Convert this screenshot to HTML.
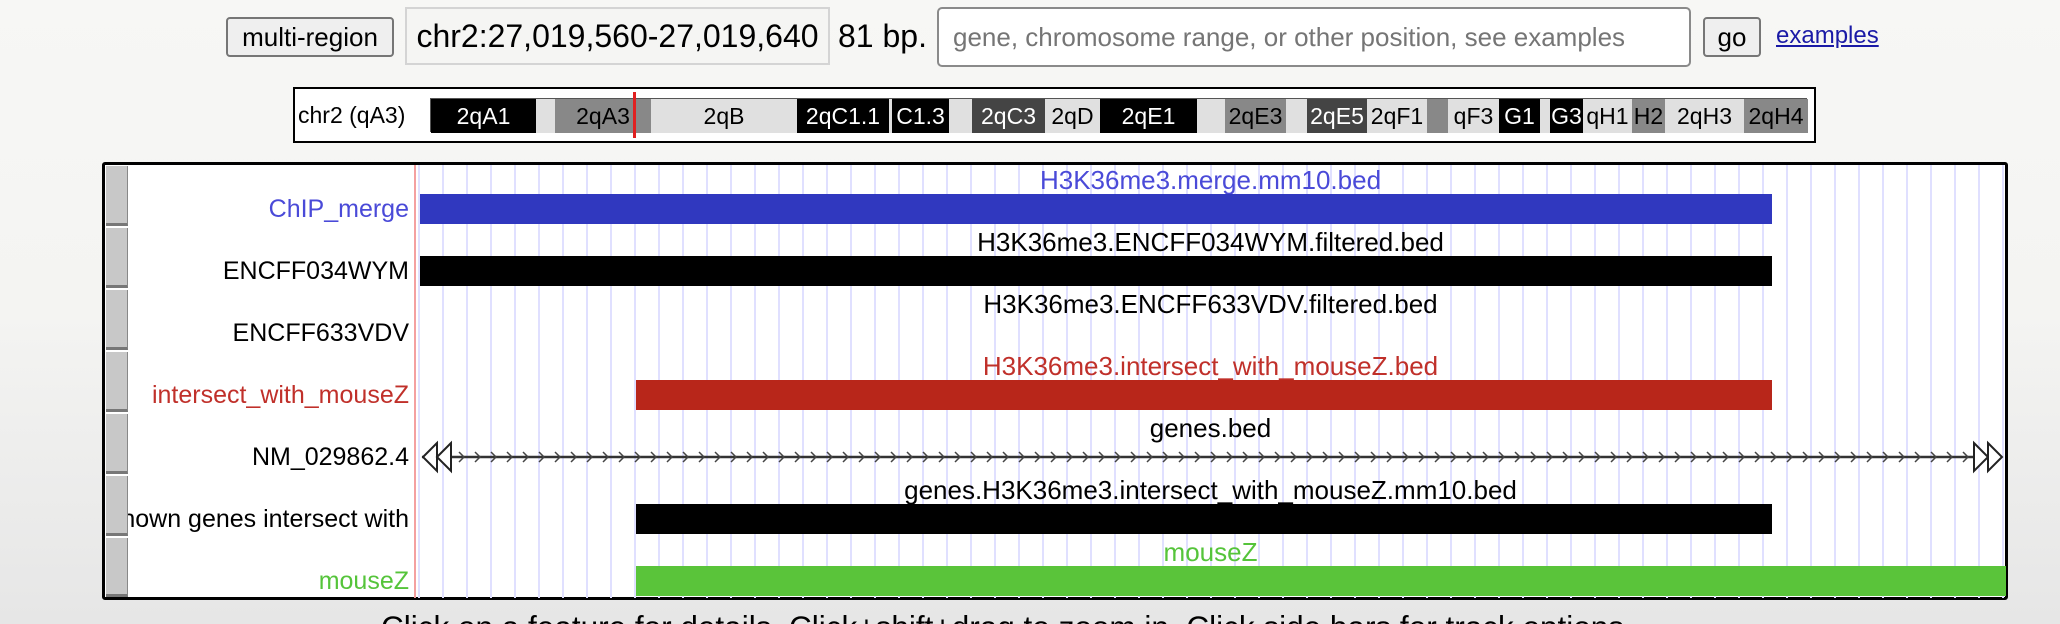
<!DOCTYPE html>
<html style="overflow:hidden;width:2060px;height:624px"><head><meta charset="utf-8"><style>
*{margin:0;padding:0;box-sizing:border-box}
body{width:2060px;height:624px;overflow:hidden;position:relative;font-family:"Liberation Sans",Arial,sans-serif;background:linear-gradient(#f7f7f5 0%,#f4f4f2 50%,#e6e6e6 100%)}
.a{position:absolute}
.btn{background:#efefef;border:2px solid #767676;border-radius:4px;font-size:26px;color:#000;text-align:center}
.band{position:absolute;top:0;height:34px;font-size:23px;line-height:34px;text-align:center;overflow:hidden;white-space:nowrap}
.bk{background:#000;color:#fff}.lt{background:#e0e0e0;color:#000}.gy{background:#888;color:#000}.dg{background:#444;color:#fff}
.side{position:absolute;left:106px;width:22px;height:60px;background:#c8c8c8;border-right:1px solid #888;border-bottom:3px solid #777}
.lbl{position:absolute;right:1651px;font-size:25px;white-space:nowrap;text-align:right;line-height:28px}
.ttl{position:absolute;left:415px;width:1591px;text-align:center;font-size:26px;line-height:26px;white-space:nowrap}
.bar{position:absolute;height:30px}
</style></head><body>
<div class="a btn" style="left:226px;top:17px;width:168px;height:40px;line-height:36px">multi-region</div>
<div class="a" style="left:405px;top:7px;width:425px;height:58px;border:2px solid #d4d4d4;background:#f5f5f3;font-size:32px;line-height:54px;text-align:center">chr2:27,019,560-27,019,640</div>
<div class="a" style="left:838px;top:7px;font-size:32px;line-height:58px">81 bp.</div>
<div class="a" style="left:937px;top:7px;width:754px;height:60px;border:2px solid #8a8a8a;border-radius:5px;background:#fff;font-size:26px;line-height:56px;color:#757575;padding-left:14px;white-space:nowrap">gene, chromosome range, or other position, see examples</div>
<div class="a btn" style="left:1703px;top:17px;width:58px;height:40px;line-height:36px">go</div>
<div class="a" style="left:1776px;top:22px;font-size:24px;color:#1a1aa6;text-decoration:underline">examples</div>

<div class="a" style="left:293px;top:87px;width:1523px;height:56px;border:2px solid #000;background:#fff"></div>
<div class="a" style="left:298px;top:98px;font-size:23px;line-height:34px">chr2 (qA3)</div>
<div class="a" style="left:430px;top:98px;width:1377px;height:34px;border:1px solid #555">
<div class="band bk" style="left:0;width:105px">2qA1</div>
<div class="band lt" style="left:105px;width:19px"></div>
<div class="band gy" style="left:124px;width:96px">2qA3</div>
<div class="band lt" style="left:220px;width:146px">2qB</div>
<div class="band bk" style="left:366px;width:92px">2qC1.1</div>
<div class="band lt" style="left:458px;width:3px"></div>
<div class="band bk" style="left:461px;width:57px">C1.3</div>
<div class="band lt" style="left:518px;width:23px"></div>
<div class="band dg" style="left:541px;width:73px">2qC3</div>
<div class="band lt" style="left:614px;width:55px">2qD</div>
<div class="band bk" style="left:669px;width:97px">2qE1</div>
<div class="band lt" style="left:766px;width:28px"></div>
<div class="band gy" style="left:794px;width:61px">2qE3</div>
<div class="band lt" style="left:855px;width:21px"></div>
<div class="band dg" style="left:876px;width:60px">2qE5</div>
<div class="band lt" style="left:936px;width:60px">2qF1</div>
<div class="band gy" style="left:996px;width:21px"></div>
<div class="band lt" style="left:1017px;width:51px">qF3</div>
<div class="band bk" style="left:1068px;width:41px">G1</div>
<div class="band lt" style="left:1109px;width:10px"></div>
<div class="band bk" style="left:1119px;width:33px">G3</div>
<div class="band lt" style="left:1152px;width:49px">qH1</div>
<div class="band gy" style="left:1201px;width:33px">H2</div>
<div class="band lt" style="left:1234px;width:79px">2qH3</div>
<div class="band gy" style="left:1313px;width:64px">2qH4</div>
</div>
<div class="a" style="left:633px;top:92px;width:3px;height:46px;background:#e02020"></div>

<div class="a" style="left:102px;top:162px;width:1906px;height:438px;border:3px solid #000;border-radius:3px;background:#fff"></div>
<div class="a" style="left:415px;top:165px;width:1591px;height:433px;background-image:linear-gradient(90deg,transparent 3px,#e0e0ff 3px,#e0e0ff 5px,transparent 5px);background-size:24px 100%"></div>
<div class="a" style="left:414px;top:165px;width:2px;height:433px;background:#f4a0a0"></div>

<div class="side" style="top:166px"></div><div class="side" style="top:228px"></div><div class="side" style="top:290px"></div><div class="side" style="top:352px"></div><div class="side" style="top:414px"></div><div class="side" style="top:476px"></div><div class="side" style="top:538px;height:59px"></div>

<div class="lbl" style="top:195px;color:#4a4ad8">ChIP_merge</div>
<div class="lbl" style="top:257px;color:#000">ENCFF034WYM</div>
<div class="lbl" style="top:319px;color:#000">ENCFF633VDV</div>
<div class="lbl" style="top:381px;color:#c0302a">intersect_with_mouseZ</div>
<div class="lbl" style="top:443px;color:#000">NM_029862.4</div>
<div class="lbl" style="top:505px;color:#000;left:128px;right:auto;width:281px;overflow:hidden;direction:rtl"><span style="direction:ltr;unicode-bidi:bidi-override">known genes intersect with</span></div>
<div class="lbl" style="top:567px;color:#55c43a">mouseZ</div>

<div class="ttl" style="top:167px;color:#4a4ad8">H3K36me3.merge.mm10.bed</div>
<div class="ttl" style="top:229px">H3K36me3.ENCFF034WYM.filtered.bed</div>
<div class="ttl" style="top:291px">H3K36me3.ENCFF633VDV.filtered.bed</div>
<div class="ttl" style="top:353px;color:#c0302a">H3K36me3.intersect_with_mouseZ.bed</div>
<div class="ttl" style="top:415px">genes.bed</div>
<div class="ttl" style="top:477px">genes.H3K36me3.intersect_with_mouseZ.mm10.bed</div>
<div class="ttl" style="top:539px;color:#55c43a">mouseZ</div>

<div class="bar" style="left:420px;top:194px;width:1352px;background:#3038bf"></div>
<div class="bar" style="left:420px;top:256px;width:1352px;background:#000"></div>
<div class="bar" style="left:636px;top:380px;width:1136px;background:#b8261a"></div>
<div class="bar" style="left:636px;top:504px;width:1136px;background:#000"></div>
<div class="bar" style="left:636px;top:566px;width:1370px;background:#5ac43a"></div>

<svg class="a" style="left:415px;top:440px" width="1591" height="36" viewBox="0 0 1591 36">
<line x1="7" y1="17" x2="1585" y2="17" stroke="#333" stroke-width="2.5"/>
<g fill="none" stroke="#444" stroke-width="1.5">
<path d="M44 12l5 5-5 5M60 12l5 5-5 5M76 12l5 5-5 5M92 12l5 5-5 5M108 12l5 5-5 5M124 12l5 5-5 5M140 12l5 5-5 5M156 12l5 5-5 5M172 12l5 5-5 5M188 12l5 5-5 5M204 12l5 5-5 5M220 12l5 5-5 5M236 12l5 5-5 5M252 12l5 5-5 5M268 12l5 5-5 5M284 12l5 5-5 5M300 12l5 5-5 5M316 12l5 5-5 5M332 12l5 5-5 5M348 12l5 5-5 5M364 12l5 5-5 5M380 12l5 5-5 5M396 12l5 5-5 5M412 12l5 5-5 5M428 12l5 5-5 5M444 12l5 5-5 5M460 12l5 5-5 5M476 12l5 5-5 5M492 12l5 5-5 5M508 12l5 5-5 5M524 12l5 5-5 5M540 12l5 5-5 5M556 12l5 5-5 5M572 12l5 5-5 5M588 12l5 5-5 5M604 12l5 5-5 5M620 12l5 5-5 5M636 12l5 5-5 5M652 12l5 5-5 5M668 12l5 5-5 5M684 12l5 5-5 5M700 12l5 5-5 5M716 12l5 5-5 5M732 12l5 5-5 5M748 12l5 5-5 5M764 12l5 5-5 5M780 12l5 5-5 5M796 12l5 5-5 5M812 12l5 5-5 5M828 12l5 5-5 5M844 12l5 5-5 5M860 12l5 5-5 5M876 12l5 5-5 5M892 12l5 5-5 5M908 12l5 5-5 5M924 12l5 5-5 5M940 12l5 5-5 5M956 12l5 5-5 5M972 12l5 5-5 5M988 12l5 5-5 5M1004 12l5 5-5 5M1020 12l5 5-5 5M1036 12l5 5-5 5M1052 12l5 5-5 5M1068 12l5 5-5 5M1084 12l5 5-5 5M1100 12l5 5-5 5M1116 12l5 5-5 5M1132 12l5 5-5 5M1148 12l5 5-5 5M1164 12l5 5-5 5M1180 12l5 5-5 5M1196 12l5 5-5 5M1212 12l5 5-5 5M1228 12l5 5-5 5M1244 12l5 5-5 5M1260 12l5 5-5 5M1276 12l5 5-5 5M1292 12l5 5-5 5M1308 12l5 5-5 5M1324 12l5 5-5 5M1340 12l5 5-5 5M1356 12l5 5-5 5M1372 12l5 5-5 5M1388 12l5 5-5 5M1404 12l5 5-5 5M1420 12l5 5-5 5M1436 12l5 5-5 5M1452 12l5 5-5 5M1468 12l5 5-5 5M1484 12l5 5-5 5M1500 12l5 5-5 5M1516 12l5 5-5 5M1532 12l5 5-5 5M1548 12l5 5-5 5"/>
</g>
<g fill="#fff" stroke="#222" stroke-width="2">
<path d="M22 3L8 17l14 14z"/><path d="M36 3L22 17l14 14z"/>
<path d="M1559 3l14 14-14 14z"/><path d="M1573 3l14 14-14 14z"/>
</g>
</svg>

<div class="a" style="left:0;top:600px;width:2060px;height:24px;overflow:hidden">
<div class="a" style="left:381px;top:9px;font-size:31.5px;line-height:36px;white-space:nowrap">Click on a feature for details. Click+shift+drag to zoom in. Click side bars for track options.</div>
</div>
</body></html>
